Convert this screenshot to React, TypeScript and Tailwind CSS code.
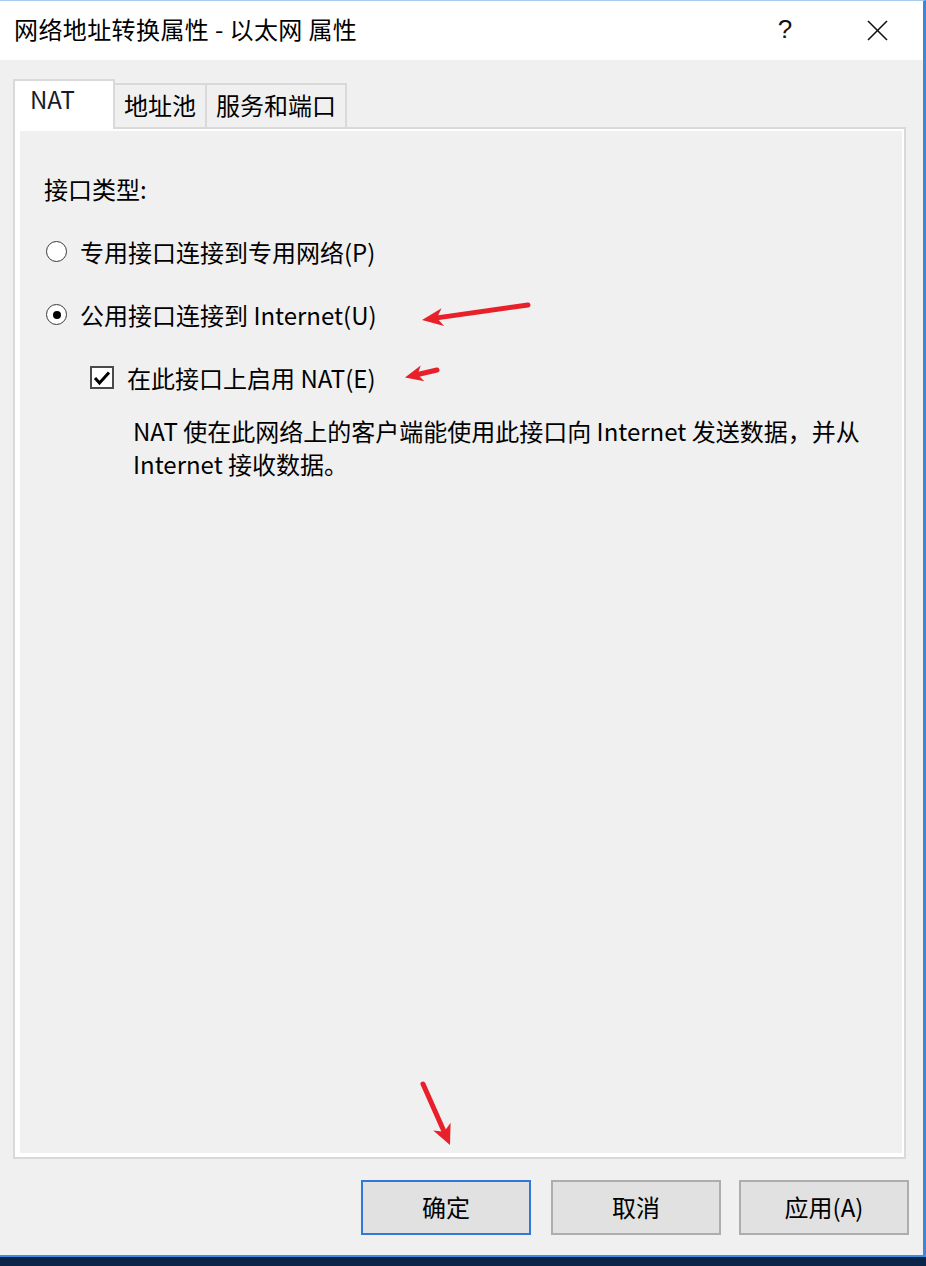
import React from "react";

function Arrow({ sx, sy, tx, ty, len = 20, half = 9 }: { sx: number; sy: number; tx: number; ty: number; len?: number; half?: number }) {
  const dx = tx - sx;
  const dy = ty - sy;
  const d = Math.hypot(dx, dy);
  const ux = dx / d;
  const uy = dy / d;
  const px = -uy;
  const py = ux;
  const bx = tx - ux * len;
  const by = ty - uy * len;
  const nx = tx - ux * (len * 0.72);
  const ny = ty - uy * (len * 0.72);
  const pts = [
    [tx, ty],
    [bx + px * half, by + py * half],
    [nx, ny],
    [bx - px * half, by - py * half],
  ]
    .map((p) => p.join(","))
    .join(" ");
  return (
    <g>
      <line x1={sx} y1={sy} x2={nx} y2={ny} stroke="#e8202a" strokeWidth={5} strokeLinecap="round" />
      <polygon points={pts} fill="#e8202a" />
    </g>
  );
}

export default function App() {
  return (
    <div className="relative w-[926px] h-[1266px] flex flex-col bg-[#0b2447] font-['Noto_Sans_CJK_SC',sans-serif] text-black overflow-hidden">
      <div className="h-[1255px] flex flex-col border-t border-t-[#a9cbee] border-r-[3px] border-r-[#3f86d6]">
        {/* Title bar */}
        <div className="h-[59px] bg-white flex items-center">
          <div className="pl-[14px] pb-[5px] text-[24px] leading-[33px] tracking-[0.4px]">网络地址转换属性 - 以太网 属性</div>
          <div className="ml-auto flex items-center">
            <div className="w-[92px] pb-[2px] flex justify-center text-[26px] leading-[33px] font-['Liberation_Sans',sans-serif] text-[#111]">?</div>
            <div className="w-[92px] flex justify-center">
              <svg width="21" height="21" viewBox="0 0 21 21">
                <line x1="1" y1="1" x2="20" y2="20" stroke="#111" strokeWidth="1.6" />
                <line x1="20" y1="1" x2="1" y2="20" stroke="#111" strokeWidth="1.6" />
              </svg>
            </div>
          </div>
        </div>

        {/* Body */}
        <div className="flex-1 bg-[#f0f0f0] pl-[13px] pr-[17px] pt-[19px] pb-[20px] flex flex-col">
          {/* Tabs */}
          <div className="h-[48px] flex items-end text-[24px] leading-[33px]">
            <div className="relative z-10 -mb-[2px] w-[102px] h-[50px] bg-white border-2 border-b-0 border-[#d9d9d9] pl-[15px] pt-[1px] text-[#1a1a2a]">
              NAT
            </div>
            <div className="w-[92px] h-[44px] pb-[4px] border-t-2 border-r-2 border-[#d9d9d9] flex items-center justify-center">地址池</div>
            <div className="w-[140px] h-[44px] pb-[4px] border-t-2 border-r-2 border-[#d9d9d9] flex items-center justify-center">服务和端口</div>
          </div>

          {/* Panel */}
          <div className="flex-1 border-2 border-[#d9d9d9]">
            <div className="h-full border-l-[5px] border-t-[2px] border-r-[2px] border-b-[4px] border-white bg-[#f0f0f0] pl-[24px] pt-[41px]">
              <div className="flex flex-col text-[24px] leading-[33px]">
                <div>接口类型:</div>
                <div className="mt-[30px] flex items-center">
                  <div className="ml-[2px] w-[21px] h-[21px] rounded-full border-[1.5px] border-[#3a3a3a] bg-white" />
                  <span className="ml-[13px]">专用接口连接到专用网络(P)</span>
                </div>
                <div className="mt-[30px] flex items-center">
                  <div className="ml-[2px] w-[21px] h-[21px] rounded-full border-[1.5px] border-[#3a3a3a] bg-white flex items-center justify-center">
                    <div className="w-[8px] h-[8px] rounded-full bg-black" />
                  </div>
                  <span className="ml-[13px]">公用接口连接到 Internet(U)</span>
                </div>
                <div className="mt-[30px] flex items-center">
                  <div className="ml-[46px] w-[24px] h-[23px] border-2 border-[#4a4a4a] bg-white flex items-center justify-center">
                    <svg width="18" height="16" viewBox="0 0 18 16">
                      <polyline points="2,8 6.5,13 16,2.5" fill="none" stroke="#000" strokeWidth="3" />
                    </svg>
                  </div>
                  <span className="ml-[13px]">在此接口上启用 NAT(E)</span>
                </div>
                <div className="mt-[20px] ml-[89px]">
                  NAT 使在此网络上的客户端能使用此接口向 Internet 发送数据，并从
                  <br />
                  Internet 接收数据。
                </div>
              </div>
            </div>
          </div>

          {/* Buttons */}
          <div className="mt-[21px] -mr-[3px] flex justify-end text-[24px] leading-[33px]">
            <button className="w-[170px] h-[55px] pb-[3px] border-2 border-[#3079d6] bg-[#e1e1e1] flex items-center justify-center">确定</button>
            <button className="ml-[20px] w-[170px] h-[55px] pb-[3px] border-2 border-[#adadad] bg-[#e1e1e1] flex items-center justify-center">取消</button>
            <button className="ml-[18px] w-[170px] h-[55px] pb-[3px] border-2 border-[#adadad] bg-[#e1e1e1] flex items-center justify-center">应用(A)</button>
          </div>
        </div>
      </div>
      <div className="h-[2px] bg-[#3d8de0]" />

      {/* Red annotation arrows */}
      <svg className="absolute inset-0 pointer-events-none" width="926" height="1266">
        <Arrow sx={528} sy={305} tx={422} ty={320} len={21} half={9} />
        <Arrow sx={437} sy={370} tx={405} ty={377.5} len={18} half={8} />
        <Arrow sx={423} sy={1084} tx={450} ty={1145} len={20} half={9.5} />
      </svg>
    </div>
  );
}
